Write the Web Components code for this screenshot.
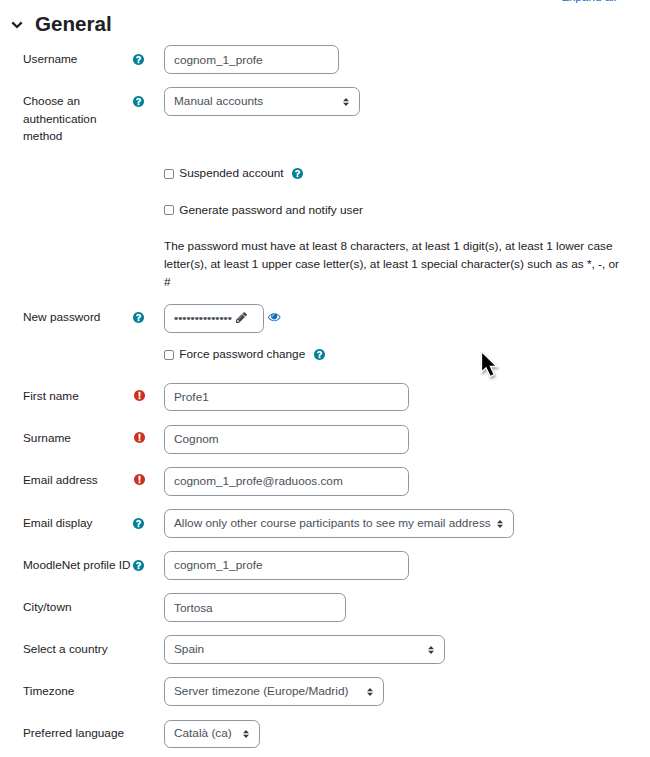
<!DOCTYPE html>
<html lang="en">
<head>
<meta charset="utf-8">
<title>General</title>
<style>
body{margin:0;background:#fff;color:#1d2125;font:11.8px/18px "Liberation Sans",Arial,sans-serif;overflow:hidden}
</style>
</head>
<body>
<profile-form></profile-form>
<script>
const ICONS = {
  help: ['128 128 1536 1536', 'M1024 1376v-192q0-14-9-23t-23-9h-192q-14 0-23 9t-9 23v192q0 14 9 23t23 9h192q14 0 23-9t9-23zM1280 704q0-88-55.5-163t-138.5-116-170-41q-243 0-371 213-15 24 8 42l132 100q7 6 19 6 16 0 25-12 53-68 86-92 34-24 86-24 48 0 85.5 26t37.5 59q0 38-20 61t-68 45q-63 28-115.5 86.5t-52.5 125.5v36q0 14 9 23t23 9h192q14 0 23-9t9-23q0-19 21.5-49.5t54.5-49.5q32-18 49-28.5t46-35 44.5-48 28-60.5 12.5-81zM1664 896q0 209-103 385.5t-279.5 279.5-385.5 103-385.5-103-279.5-279.5-103-385.5 103-385.5 279.5-279.5 385.5-103 385.5 103 279.5 279.5 103 385.5z', '#008196', 11, 11],
  required: ['128 128 1536 1536', 'M896 128q209 0 385.5 103t279.5 279.5 103 385.5-103 385.5-279.5 279.5-385.5 103-385.5-103-279.5-279.5-103-385.5 103-385.5 279.5-279.5 385.5-103zm128 1247v-190q0-14-9-23.5t-22-9.5h-192q-13 0-23 10t-10 23v190q0 13 10 23t23 10h192q13 0 22-9.5t9-23.5zm-2-344l18-621q0-12-10-18-10-8-24-8h-220q-14 0-24 8-10 6-10 18l17 621q0 10 10 17.5t24 7.5h185q14 0 23.5-7.5t10.5-17.5z', '#ca3120', 11, 11],
  pencil: ['128 128 1536 1536', 'M491 1536l91-91-235-235-91 91v107h128v128h107zm523-928q0-22-22-22-10 0-17 7l-542 542q-7 7-7 17 0 22 22 22 10 0 17-7l542-542q7-7 7-17zm-54-192l416 416-832 832h-416v-416zm683 96q0 53-37 90l-166 166-416-416 166-165q36-38 90-38 53 0 91 38l235 234q37 39 37 91z', '#40464c', 11, 11],
  eye: ['0 384 1792 1152', 'M1664 960q-152-236-381-353 61 104 61 225 0 185-131.5 316.5t-316.5 131.5-316.5-131.5-131.5-316.5q0-121 61-225-229 117-381 353 133 205 333.5 326.5t434.5 121.5 434.5-121.5 333.5-326.5zm-720-384q0-20-14-34t-34-14q-125 0-214.5 89.5t-89.5 214.5q0 20 14 34t34 14 34-14 14-34q0-86 61-147t147-61q20 0 34-14t14-34zm848 384q0 34-20 69-140 230-376.5 368.5t-499.5 138.5-499.5-139-376.5-368q-20-35-20-69t20-69q140-229 376.5-368t499.5-139 499.5 139 376.5 368q20 35 20 69z', '#0f6cbf', 12.5, 8.5]
};

customElements.define('form-icon', class extends HTMLElement {
  connectedCallback() {
    const [box, path, color, w, h] = ICONS[this.getAttribute('name')];
    this.attachShadow({mode: 'open'}).innerHTML =
      `<style>:host{display:block;flex:none;line-height:0}svg{display:block;width:${w}px;height:${h}px}</style>
       <svg viewBox="${box}"><path fill="${color}" d="${path}"/></svg>`;
  }
});

customElements.define('form-row', class extends HTMLElement {
  connectedCallback() {
    const label = this.getAttribute('label') || '', icon = this.getAttribute('icon');
    this.attachShadow({mode: 'open'}).innerHTML = `
      <style>
        :host{display:grid;grid-template-columns:121px 1fr;column-gap:20px;height:42px;padding-left:23px;align-items:start}
        .label{display:flex;justify-content:space-between;padding-top:var(--label-top,6px);line-height:17.6px}
        .text{white-space:${this.hasAttribute('wrap') ? 'normal' : 'nowrap'};width:${this.hasAttribute('wrap') ? '84px' : '108px'}}
        form-icon{margin-top:3px}
        form-icon[name=help]{padding-right:.3px}
        form-icon[name=required]{margin:2px -.5px 0 0}
        .field{display:flex}
      </style>
      <div class="label"><span class="text">${label}</span>${icon ? `<form-icon name="${icon}"></form-icon>` : ''}</div>
      <div class="field"><slot></slot></div>`;
  }
});

customElements.define('text-field', class extends HTMLElement {
  connectedCallback() {
    this.attachShadow({mode: 'open'}).innerHTML = `
      <style>
        :host{display:flex;box-sizing:border-box;align-items:center;gap:4px;height:29px;border:1px solid #8f959e;border-radius:6.5px;padding:0 9px 1px;color:#495057;white-space:nowrap;width:245px}
        :host([low]){padding:1px 9px 0}
      </style><slot></slot>`;
  }
});

customElements.define('select-field', class extends HTMLElement {
  connectedCallback() {
    this.attachShadow({mode: 'open'}).innerHTML = `
      <style>
        :host{display:flex;box-sizing:border-box;align-items:center;justify-content:space-between;height:29px;border:1px solid #8f959e;border-radius:6.5px;padding:0 10px 1px 9px;color:#495057;white-space:nowrap}
        svg{display:block;flex:none;width:6px;height:8px;margin-top:1px}
      </style><slot></slot>
      <svg viewBox="0 0 6 8"><path fill="#343a40" d="M3 0L0 3.2h6zm0 8L0 4.8h6z"/></svg>`;
  }
});

customElements.define('check-option', class extends HTMLElement {
  connectedCallback() {
    this.attachShadow({mode: 'open'}).innerHTML = `
      <style>
        :host{display:flex;align-items:center;height:36px}
        i{box-sizing:border-box;width:10px;height:10px;border:1px solid #858585;border-radius:2px;margin-right:5.3px;background:#fff}
        :host([help]) i{margin-top:1px}
        form-icon{margin-left:8.3px}
      </style><i></i><slot></slot>${this.hasAttribute('help') ? '<form-icon name="help"></form-icon>' : ''}`;
  }
});

customElements.define('mouse-pointer', class extends HTMLElement {
  connectedCallback() {
    this.attachShadow({mode: 'open'}).innerHTML = `
      <style>:host{position:absolute;left:478px;top:347px}svg{display:block;filter:drop-shadow(1px 2px 1px rgba(0,0,0,.35))}</style>
      <svg width="24" height="34" viewBox="0 0 24 34"><path d="M3.5 4.5V25L8 20.8L12.2 29.5L16.2 27.5L12.4 19.5H18.8Z" fill="#000" stroke="#fff" stroke-width="1.3"/></svg>`;
  }
});

customElements.define('profile-form', class extends HTMLElement {
  connectedCallback() {
    this.attachShadow({mode: 'open'}).innerHTML = `
      <style>
        :host{display:block;height:757px;overflow:hidden;position:relative}
        header{display:flex;align-items:center;height:45px;box-sizing:border-box;padding:2px 0 0 11px}
        header svg{width:12px;height:8px;margin:3px 12px 0 0}
        h3{margin:0;font-size:20.6px;line-height:26px;font-weight:700}
        .expand{position:absolute;left:561.5px;top:-12px;color:#0f6cbf;line-height:18px}
        .static{padding-top:9px;width:460px}
        .dots{-webkit-text-stroke:.15px #495057}
        .pencil{margin-top:-1px}
        .eye{margin:9px 0 0 4px}
        .up{--label-top:5px}
      </style>
      <a class="expand">Expand all</a>
      <header>
        <svg viewBox="0 0 12 8"><path d="M1.3 1.4L6 6L10.7 1.4" fill="none" stroke="#1d2125" stroke-width="2.3"/></svg>
        <h3>General</h3>
      </header>
      <form-row label="Username" icon="help"><text-field low style="width:175px">cognom_1_profe</text-field></form-row>
      <form-row label="Choose an authentication method" icon="help" wrap style="height:68px"><select-field style="width:196px">Manual accounts</select-field></form-row>
      <form-row style="height:37px"><check-option help>Suspended account</check-option></form-row>
      <form-row style="height:36px"><check-option>Generate password and notify user</check-option></form-row>
      <form-row style="height:76px"><div class="static">The password must have at least 8 characters, at least 1 digit(s), at least 1 lower case letter(s), at least 1 upper case letter(s), at least 1 special character(s) such as as *, -, or #</div></form-row>
      <form-row label="New password" icon="help" style="height:32px;--label-top:5.6px"><text-field style="width:100px"><span class="dots">${'•'.repeat(14)}</span><form-icon class="pencil" name="pencil"></form-icon></text-field><form-icon class="eye" name="eye"></form-icon></form-row>
      <form-row style="height:47px"><check-option help>Force password change</check-option></form-row>
      <form-row label="First name" icon="required"><text-field style="height:28px">Profe1</text-field></form-row>
      <form-row label="Surname" icon="required"><text-field>Cognom</text-field></form-row>
      <form-row label="Email address" icon="required"><text-field>cognom_1_profe@raduoos.com</text-field></form-row>
      <form-row label="Email display" icon="help"><select-field style="width:350px">Allow only other course participants to see my email address</select-field></form-row>
      <form-row label="MoodleNet profile ID" icon="help"><text-field>cognom_1_profe</text-field></form-row>
      <form-row label="City/town"><text-field low style="width:182px">Tortosa</text-field></form-row>
      <form-row label="Select a country"><select-field style="width:281px">Spain</select-field></form-row>
      <form-row label="Timezone" style="height:43px"><select-field style="width:220px">Server timezone (Europe/Madrid)</select-field></form-row>
      <form-row class="up" label="Preferred language" style="height:37px"><select-field style="width:96px;height:28px;padding-bottom:2px">Català (ca)</select-field></form-row>
      <mouse-pointer></mouse-pointer>`;
    for (const name of ['First name', 'Surname', 'Email address', 'New password'])
      this.shadowRoot.querySelector(`[label="${name}"]`).classList.add('up');
    this.shadowRoot.querySelector('[label="New password"]').style.removeProperty('--label-top');
  }
});
</script>
</body>
</html>
